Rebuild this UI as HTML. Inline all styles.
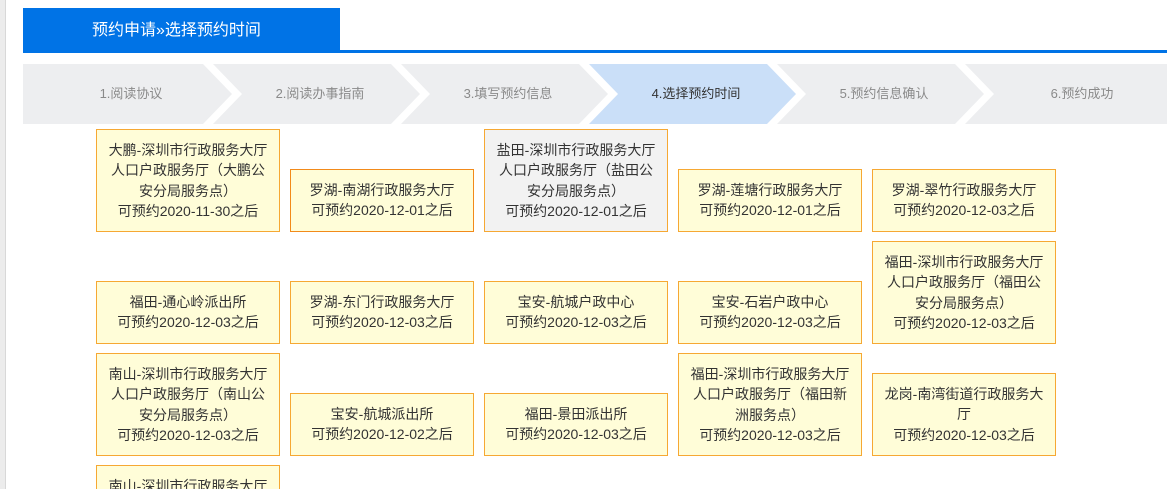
<!DOCTYPE html>
<html style="height:489px;overflow:hidden"><head><meta charset="utf-8"><style>
*{margin:0;padding:0;box-sizing:border-box}
body{width:1167px;height:489px;overflow:hidden;background:#fff;position:relative;font-family:"Liberation Sans","Noto Sans CJK SC",sans-serif}
.lstrip{position:absolute;left:0;top:0;width:6px;height:489px;background:#ececec;border-right:1px solid #d8d8d8}
.hdr{position:absolute;left:23px;top:8px;width:317px;height:45px;background:#0073e6;color:#fff;font-size:16px;line-height:45px;padding-left:69px}
.hline{position:absolute;left:340px;top:50px;width:827px;height:3px;background:#0073e6}
svg.steps{position:absolute;left:0;top:64px}
.st{position:absolute;top:64px;height:60px;line-height:60px;font-size:13px;color:#8a8a8a;text-align:center;width:200px}
.box{position:absolute;width:184px;border:1px solid #f6a833;background:#fffdd8;font-size:14px;line-height:20.3px;color:#333;text-align:center;padding:10px 0;white-space:nowrap}
</style></head><body>
<div class="lstrip"></div>
<div class="hdr">预约申请»选择预约时间</div>
<div class="hline"></div>
<svg class="steps" width="1167" height="60">
<polygon points="23,0 203,0 232,30 203,60 23,60" fill="#edeef0"/>
<polygon points="213,0 391,0 420,30 391,60 213,60 242,30" fill="#edeef0"/>
<polygon points="401,0 579,0 608,30 579,60 401,60 430,30" fill="#edeef0"/>
<polygon points="589,0 767,0 796,30 767,60 589,60 618,30" fill="#cadff8"/>
<polygon points="777,0 955,0 984,30 955,60 777,60 806,30" fill="#edeef0"/>
<polygon points="965,0 1167,0 1167,60 965,60 994,30" fill="#edeef0"/>
</svg>
<div class="st" style="left:31px">1.阅读协议</div>
<div class="st" style="left:220px">2.阅读办事指南</div>
<div class="st" style="left:408px">3.填写预约信息</div>
<div class="st" style="left:596px;color:#333">4.选择预约时间</div>
<div class="st" style="left:784px">5.预约信息确认</div>
<div class="st" style="left:982px">6.预约成功</div>

<div class="box" style="left:96px;top:129px">大鹏-深圳市行政服务大厅<br>人口户政服务厅（大鹏公<br>安分局服务点）<br>可预约2020-11-30之后</div>
<div class="box" style="left:290px;top:169px;border-color:#f28a1a">罗湖-南湖行政服务大厅<br>可预约2020-12-01之后</div>
<div class="box" style="left:484px;top:129px;background:#f2f2f2">盐田-深圳市行政服务大厅<br>人口户政服务厅（盐田公<br>安分局服务点）<br>可预约2020-12-01之后</div>
<div class="box" style="left:678px;top:169px">罗湖-莲塘行政服务大厅<br>可预约2020-12-01之后</div>
<div class="box" style="left:872px;top:169px">罗湖-翠竹行政服务大厅<br>可预约2020-12-03之后</div>

<div class="box" style="left:96px;top:281px">福田-通心岭派出所<br>可预约2020-12-03之后</div>
<div class="box" style="left:290px;top:281px">罗湖-东门行政服务大厅<br>可预约2020-12-03之后</div>
<div class="box" style="left:484px;top:281px">宝安-航城户政中心<br>可预约2020-12-03之后</div>
<div class="box" style="left:678px;top:281px">宝安-石岩户政中心<br>可预约2020-12-03之后</div>
<div class="box" style="left:872px;top:241px">福田-深圳市行政服务大厅<br>人口户政服务厅（福田公<br>安分局服务点）<br>可预约2020-12-03之后</div>

<div class="box" style="left:96px;top:353px">南山-深圳市行政服务大厅<br>人口户政服务厅（南山公<br>安分局服务点）<br>可预约2020-12-03之后</div>
<div class="box" style="left:290px;top:393px">宝安-航城派出所<br>可预约2020-12-02之后</div>
<div class="box" style="left:484px;top:393px">福田-景田派出所<br>可预约2020-12-03之后</div>
<div class="box" style="left:678px;top:353px">福田-深圳市行政服务大厅<br>人口户政服务厅（福田新<br>洲服务点）<br>可预约2020-12-03之后</div>
<div class="box" style="left:872px;top:373px">龙岗-南湾街道行政服务大<br>厅<br>可预约2020-12-03之后</div>

<div class="box" style="left:96px;top:465px;height:24px;overflow:hidden;border-bottom:none">南山-深圳市行政服务大厅<br>人口户政服务厅（南山公<br>安分局服务点）<br>可预约2020-12-03之后</div>
</body></html>
